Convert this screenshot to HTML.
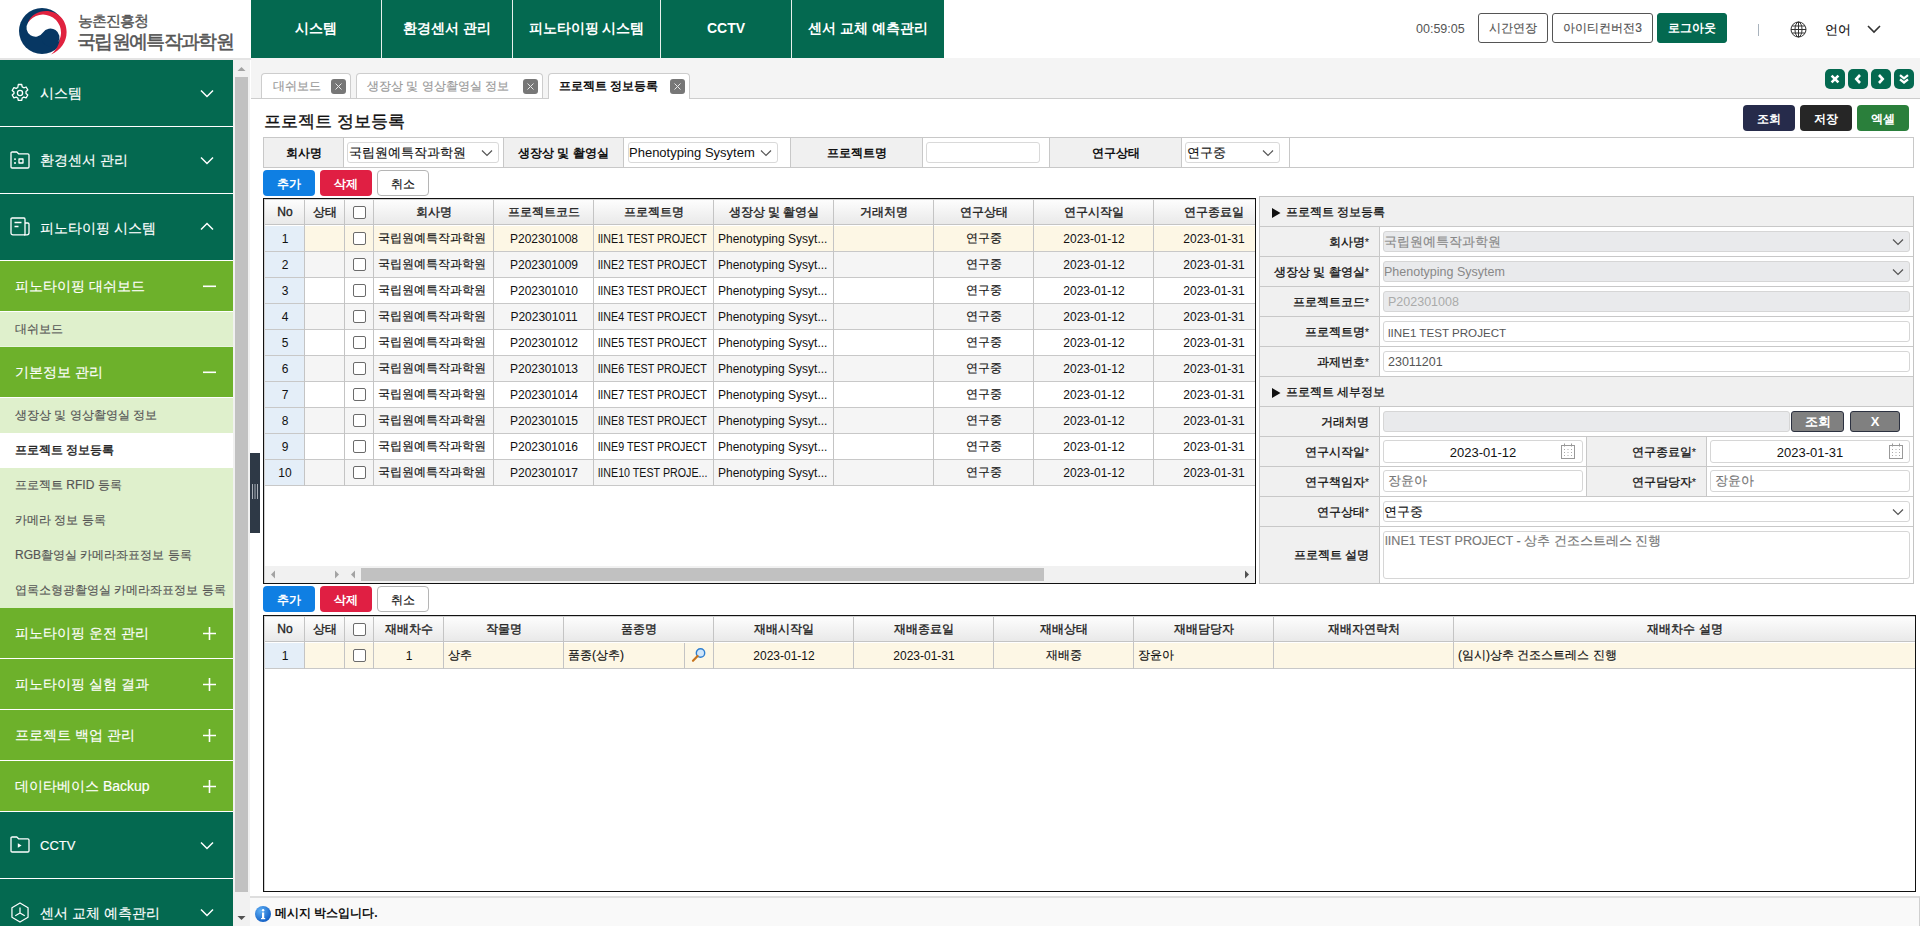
<!DOCTYPE html>
<html lang="ko">
<head>
<meta charset="utf-8">
<style>
*{box-sizing:border-box;margin:0;padding:0}
html,body{width:1920px;height:926px;overflow:hidden;background:#fff}
body{position:relative;font-family:"Liberation Sans",sans-serif;color:#222;font-size:12px;-webkit-text-stroke:0.15px currentColor}
[style*="font-weight:bold"],#nav div{-webkit-text-stroke:0}
.abs{position:absolute}
/* header */
#hdr{left:0;top:0;width:1920px;height:58px;background:#fff}
#logo-t1{left:78px;top:12px;font-size:15px;color:#555;white-space:nowrap;letter-spacing:-0.9px;-webkit-text-stroke:0.4px #555}
#logo-t2{left:77px;top:29px;font-size:19px;color:#555;white-space:nowrap;letter-spacing:-1.65px;-webkit-text-stroke:0.5px #555}
#nav{left:251px;top:0;height:58px;display:flex;background:#046950}
#nav div{height:58px;line-height:56px;text-align:center;color:#fff;font-weight:bold;font-size:14px;white-space:nowrap;border-right:1px solid #e8f0ec}
#nav div:last-child{border-right:none}
#time{left:1416px;top:21px;font-size:12.5px;-webkit-text-stroke:0;color:#555;line-height:16px}
.hbtn{top:13px;height:30px;border:1px solid #555;border-radius:3px;background:#fff;color:#555;font-size:12px;line-height:28px;text-align:center;white-space:nowrap}
#hline{left:0;top:58px;width:1920px;height:2px;background:#e4e4e4}
/* sidebar */
#side{left:0;top:60px;width:233px;height:866px;background:#fff;overflow:hidden}
.m1{position:absolute;left:0;width:233px;background:#046950;color:#fff;font-size:14px}
.m1 .ic{position:absolute;left:10px}
.m1 .tx{position:absolute;left:40px;white-space:nowrap}
.m1 .ch{position:absolute;left:200px}
.m2{position:absolute;left:0;width:233px;height:50px;background:#6db12b;color:#fff;font-size:14px}
.m2 .tx{position:absolute;left:15px;top:17px;white-space:nowrap;line-height:17px}
.m2 .pm{position:absolute;left:203px;top:0}
.m3{position:absolute;left:0;width:233px;height:35px;background:#dff0cc;color:#555;font-size:12px}
.m3 .tx{position:absolute;left:15px;top:10px;white-space:nowrap;line-height:15px}
.sep{position:absolute;left:0;width:233px;height:1px;background:#fff}
#sscroll{left:233px;top:60px;width:17px;height:866px;background:#f1f1f1}
#sthumb{left:235px;top:77px;width:13px;height:815px;background:#c1c1c1}
/* content */
#tabbar{left:251px;top:58px;width:1669px;height:41px;background:#f4f4f4;border-bottom:1px solid #cfcfcf}
.tab{position:absolute;top:15px;height:26px;background:#fff;border:1px solid #cfcfcf;border-bottom:none;border-radius:4px 4px 0 0;font-size:12px;color:#999;white-space:nowrap}
.tab .tx{position:absolute;top:6px;line-height:15px}
.tab .x{position:absolute;top:6px;width:15px;height:15px;background:#777;border-radius:3px}
.tab .x svg{position:absolute;left:3px;top:3px}
.tnav{position:absolute;top:10px;width:20px;height:20px;border-radius:5px;background:#046950}
.tnav svg{position:absolute;left:0;top:0}
#main{left:251px;top:99px;width:1669px;height:798px;background:#fff}
</style>
</head>
<body>
<!-- HEADER -->
<div id="hdr" class="abs">
  <svg class="abs" style="left:15px;top:4px" width="56" height="54" viewBox="0 0 56 54">
    <circle cx="27" cy="27" r="23" fill="#073763"/>
    <path d="M12.95 18.7 C16 11 23 7 31 7 C43 7 51.6 16 51.6 28 C51.6 38 46 46 36 50.5 C43 45 46 37 44.5 28.6 A16.5 16.5 0 0 0 14.21 19.54Z" fill="#e0223f"/>
    <circle cx="35.5" cy="33.5" r="9" fill="#073763"/>
    <path d="M12.95 18.7 A18 18 0 0 1 43.05 38.5 A9 9 0 0 0 28 28.6 A9 9 0 0 1 12.95 18.7Z" fill="#fff"/>
  </svg>
  <div id="logo-t1" class="abs">농촌진흥청</div>
  <div id="logo-t2" class="abs">국립원예특작과학원</div>
</div>
<div id="nav" class="abs">
  <div style="width:131px">시스템</div>
  <div style="width:131px">환경센서 관리</div>
  <div style="width:148px">피노타이핑 시스템</div>
  <div style="width:131px">CCTV</div>
  <div style="width:152px">센서 교체 예측관리</div>
</div>
<div id="time" class="abs">00:59:05</div>
<div class="abs hbtn" style="left:1478px;width:70px">시간연장</div>
<div class="abs hbtn" style="left:1552px;width:101px">아이티컨버전3</div>
<div class="abs hbtn" style="left:1657px;width:70px;background:#046950;border-color:#046950;color:#fff;font-weight:bold">로그아웃</div>
<div class="abs" style="left:1758px;top:24px;width:1px;height:12px;background:#a9b3bd"></div>
<svg class="abs" style="left:1790px;top:21px" width="17" height="17" viewBox="0 0 17 17" fill="none" stroke="#333" stroke-width="1">
  <circle cx="8.5" cy="8.5" r="7.5"/><ellipse cx="8.5" cy="8.5" rx="3.5" ry="7.5"/><line x1="8.5" y1="1" x2="8.5" y2="16"/><line x1="1" y1="8.5" x2="16" y2="8.5"/><line x1="2" y1="5" x2="15" y2="5"/><line x1="2" y1="12" x2="15" y2="12"/>
</svg>
<div class="abs" style="left:1825px;top:22px;font-size:12.5px;color:#111;line-height:17px">언어</div>
<svg class="abs" style="left:1867px;top:25px" width="14" height="9" viewBox="0 0 14 9" fill="none" stroke="#333" stroke-width="1.6"><path d="M1 1 L7 7 L13 1"/></svg>
<div id="hline" class="abs"></div>

<!-- MAIN -->
<div class="abs" style="left:251px;top:58px;width:1669px;height:41px;background:#f4f4f4;border-bottom:1px solid #cdcdcd"></div>
<div class="abs" style="left:261px;top:73px;width:90px;height:25px;background:#fff;border:1px solid #cdcdcd;border-bottom:none;border-radius:4px 4px 0 0"></div>
<div class="abs" style="left:273px;top:79px;font-size:12px;line-height:15px;color:#999;font-weight:normal;white-space:nowrap">대쉬보드</div>
<div class="abs" style="left:331px;top:79px;width:15px;height:15px;background:#777;border-radius:3px"><svg class="abs" style="left:4px;top:4px" width="7" height="7"><path d="M0.5 0.5L6.5 6.5M6.5 0.5L0.5 6.5" stroke="#e8e8e8" stroke-width="1"/></svg></div>
<div class="abs" style="left:356px;top:73px;width:187px;height:25px;background:#fff;border:1px solid #cdcdcd;border-bottom:none;border-radius:4px 4px 0 0"></div>
<div class="abs" style="left:367px;top:79px;font-size:12px;line-height:15px;color:#999;font-weight:normal;white-space:nowrap">생장상 및 영상촬영실 정보</div>
<div class="abs" style="left:523px;top:79px;width:15px;height:15px;background:#777;border-radius:3px"><svg class="abs" style="left:4px;top:4px" width="7" height="7"><path d="M0.5 0.5L6.5 6.5M6.5 0.5L0.5 6.5" stroke="#e8e8e8" stroke-width="1"/></svg></div>
<div class="abs" style="left:548px;top:73px;width:142px;height:26px;background:#fff;border:1px solid #cdcdcd;border-bottom:none;border-radius:4px 4px 0 0"></div>
<div class="abs" style="left:559px;top:79px;font-size:12px;line-height:15px;color:#111;font-weight:bold;white-space:nowrap">프로젝트 정보등록</div>
<div class="abs" style="left:670px;top:79px;width:15px;height:15px;background:#777;border-radius:3px"><svg class="abs" style="left:4px;top:4px" width="7" height="7"><path d="M0.5 0.5L6.5 6.5M6.5 0.5L0.5 6.5" stroke="#e8e8e8" stroke-width="1"/></svg></div>
<div class="abs" style="left:1825px;top:69px;width:20px;height:20px;border-radius:5px;background:#046950"><svg class="abs" style="left:0;top:0" width="20" height="20"><path d="M6.6 6.6L13.4 13.4M13.4 6.6L6.6 13.4" stroke="#fff" stroke-width="2.6"/></svg></div>
<div class="abs" style="left:1848px;top:69px;width:20px;height:20px;border-radius:5px;background:#046950"><svg class="abs" style="left:0;top:0" width="20" height="20"><path d="M12 6L8.3 10L12 14" stroke="#fff" stroke-width="2.6" fill="none"/></svg></div>
<div class="abs" style="left:1871px;top:69px;width:20px;height:20px;border-radius:5px;background:#046950"><svg class="abs" style="left:0;top:0" width="20" height="20"><path d="M8 6L11.7 10L8 14" stroke="#fff" stroke-width="2.6" fill="none"/></svg></div>
<div class="abs" style="left:1894px;top:69px;width:20px;height:20px;border-radius:5px;background:#046950"><svg class="abs" style="left:0;top:0" width="20" height="20"><path d="M6 6.2L10 9.3L14 6.2M6 10.4L10 13.5L14 10.4" stroke="#fff" stroke-width="2.3" fill="none"/></svg></div>
<div class="abs" style="left:264px;top:110px;font-size:17.4px;line-height:22px;color:#111;-webkit-text-stroke:0.35px #111;white-space:nowrap">프로젝트 정보등록</div>
<div class="abs" style="left:1743px;top:105px;width:52px;height:26px;background:#262b4b;border-radius:4px;color:#fff;font-weight:bold;font-size:12px;line-height:28px;text-align:center">조회</div>
<div class="abs" style="left:1800px;top:105px;width:52px;height:26px;background:#262626;border-radius:4px;color:#fff;font-weight:bold;font-size:12px;line-height:28px;text-align:center">저장</div>
<div class="abs" style="left:1857px;top:105px;width:52px;height:26px;background:#2a7f3b;border-radius:4px;color:#fff;font-weight:bold;font-size:12px;line-height:28px;text-align:center">엑셀</div>
<div class="abs" style="left:263px;top:137px;width:1651px;height:31px;border:1px solid #c8c8c8;background:#fff"></div>
<div class="abs" style="left:264px;top:138px;width:80px;height:29px;background:#f0f0f0;border-right:1px solid #c8c8c8;font-weight:bold;font-size:12px;line-height:30px;text-align:center;color:#111;white-space:nowrap">회사명</div>
<div class="abs" style="left:504px;top:138px;width:120px;height:29px;background:#f0f0f0;border-right:1px solid #c8c8c8;font-weight:bold;font-size:12px;line-height:30px;text-align:center;color:#111;white-space:nowrap">생장상 및 촬영실</div>
<div class="abs" style="left:791px;top:138px;width:132px;height:29px;background:#f0f0f0;border-right:1px solid #c8c8c8;font-weight:bold;font-size:12px;line-height:30px;text-align:center;color:#111;white-space:nowrap">프로젝트명</div>
<div class="abs" style="left:1050px;top:138px;width:132px;height:29px;background:#f0f0f0;border-right:1px solid #c8c8c8;font-weight:bold;font-size:12px;line-height:30px;text-align:center;color:#111;white-space:nowrap">연구상태</div>
<div class="abs" style="left:503px;top:138px;width:1px;height:29px;background:#c8c8c8"></div>
<div class="abs" style="left:790px;top:138px;width:1px;height:29px;background:#c8c8c8"></div>
<div class="abs" style="left:1049px;top:138px;width:1px;height:29px;background:#c8c8c8"></div>
<div class="abs" style="left:1289px;top:138px;width:1px;height:29px;background:#c8c8c8"></div>
<div class="abs" style="left:347px;top:142px;width:152px;height:21px;border:1px solid #d9d9d9;border-radius:3px;background:#fff"></div>
<div class="abs" style="left:349px;top:142px;line-height:21px;font-size:13px;color:#111;white-space:nowrap;">국립원예특작과학원</div>
<svg class="abs" style="left:481px;top:149px" width="12" height="8"><path d="M1 1.5L6 6.5L11 1.5" stroke="#555" stroke-width="1.2" fill="none"/></svg>
<div class="abs" style="left:628px;top:142px;width:150px;height:21px;border:1px solid #d9d9d9;border-radius:3px;background:#fff"></div>
<div class="abs" style="left:629px;top:142px;line-height:21px;font-size:13px;color:#111;white-space:nowrap;-webkit-text-stroke:0;">Phenotyping Sysytem</div>
<svg class="abs" style="left:760px;top:149px" width="12" height="8"><path d="M1 1.5L6 6.5L11 1.5" stroke="#555" stroke-width="1.2" fill="none"/></svg>
<div class="abs" style="left:926px;top:142px;width:114px;height:21px;border:1px solid #d9d9d9;border-radius:3px;background:#fff"></div>
<div class="abs" style="left:1185px;top:142px;width:95px;height:21px;border:1px solid #d9d9d9;border-radius:3px;background:#fff"></div>
<div class="abs" style="left:1187px;top:142px;line-height:21px;font-size:13px;color:#111;white-space:nowrap;">연구중</div>
<svg class="abs" style="left:1262px;top:149px" width="12" height="8"><path d="M1 1.5L6 6.5L11 1.5" stroke="#555" stroke-width="1.2" fill="none"/></svg>
<div class="abs" style="left:263px;top:170px;width:52px;height:26px;background:#0f7fe3;border-radius:4px;color:#fff;font-weight:bold;font-size:12px;line-height:28px;text-align:center">추가</div>
<div class="abs" style="left:320px;top:170px;width:52px;height:26px;background:#e01f43;border-radius:4px;color:#fff;font-weight:bold;font-size:12px;line-height:28px;text-align:center">삭제</div>
<div class="abs" style="left:377px;top:170px;width:52px;height:26px;background:#fff;border:1px solid #b5b5b5;border-radius:4px;color:#111;font-size:12px;line-height:26px;text-align:center">취소</div>
<div class="abs" style="left:263px;top:586px;width:52px;height:26px;background:#0f7fe3;border-radius:4px;color:#fff;font-weight:bold;font-size:12px;line-height:28px;text-align:center">추가</div>
<div class="abs" style="left:320px;top:586px;width:52px;height:26px;background:#e01f43;border-radius:4px;color:#fff;font-weight:bold;font-size:12px;line-height:28px;text-align:center">삭제</div>
<div class="abs" style="left:377px;top:586px;width:52px;height:26px;background:#fff;border:1px solid #b5b5b5;border-radius:4px;color:#111;font-size:12px;line-height:26px;text-align:center">취소</div>
<div class="abs" style="left:263px;top:198px;width:993px;height:386px;border:1px solid #111;background:#fff;overflow:hidden">
<div class="abs" style="left:0;top:0;width:991px;height:1px;background:#d0d0d0"></div>
<div class="abs" style="left:0;top:0;width:1px;height:384px;background:#d0d0d0"></div>
<div class="abs" style="left:1px;top:1px;width:991px;height:25px;background:linear-gradient(#fdfdfd,#e9e9e9);border-bottom:1px solid #c4c4c4"></div>
<div class="abs" style="left:1px;top:1px;width:40px;height:25px;line-height:25px;text-align:center;font-size:12px;font-weight:normal;color:#222;-webkit-text-stroke:0.35px #222;white-space:nowrap">No</div>
<div class="abs" style="left:41px;top:1px;width:40px;height:25px;line-height:25px;text-align:center;font-size:12px;font-weight:normal;color:#222;-webkit-text-stroke:0.35px #222;white-space:nowrap">상태</div>
<div class="abs" style="left:89px;top:7px;width:13px;height:13px;border:1px solid #6b6b6b;border-radius:2px;background:#fff"></div>
<div class="abs" style="left:110px;top:1px;width:120px;height:25px;line-height:25px;text-align:center;font-size:12px;font-weight:normal;color:#222;-webkit-text-stroke:0.35px #222;white-space:nowrap">회사명</div>
<div class="abs" style="left:230px;top:1px;width:100px;height:25px;line-height:25px;text-align:center;font-size:12px;font-weight:normal;color:#222;-webkit-text-stroke:0.35px #222;white-space:nowrap">프로젝트코드</div>
<div class="abs" style="left:330px;top:1px;width:120px;height:25px;line-height:25px;text-align:center;font-size:12px;font-weight:normal;color:#222;-webkit-text-stroke:0.35px #222;white-space:nowrap">프로젝트명</div>
<div class="abs" style="left:450px;top:1px;width:120px;height:25px;line-height:25px;text-align:center;font-size:12px;font-weight:normal;color:#222;-webkit-text-stroke:0.35px #222;white-space:nowrap">생장상 및 촬영실</div>
<div class="abs" style="left:570px;top:1px;width:100px;height:25px;line-height:25px;text-align:center;font-size:12px;font-weight:normal;color:#222;-webkit-text-stroke:0.35px #222;white-space:nowrap">거래처명</div>
<div class="abs" style="left:670px;top:1px;width:100px;height:25px;line-height:25px;text-align:center;font-size:12px;font-weight:normal;color:#222;-webkit-text-stroke:0.35px #222;white-space:nowrap">연구상태</div>
<div class="abs" style="left:770px;top:1px;width:120px;height:25px;line-height:25px;text-align:center;font-size:12px;font-weight:normal;color:#222;-webkit-text-stroke:0.35px #222;white-space:nowrap">연구시작일</div>
<div class="abs" style="left:890px;top:1px;width:120px;height:25px;line-height:25px;text-align:center;font-size:12px;font-weight:normal;color:#222;-webkit-text-stroke:0.35px #222;white-space:nowrap">연구종료일</div>
<div class="abs" style="left:1px;top:27px;width:991px;height:26px;background:#fdf7e5;border-bottom:1px solid #c8c8c8"></div>
<div class="abs" style="left:1px;top:27px;width:39px;height:25px;background:#e4eef8"></div>
<div class="abs" style="left:1px;top:28px;width:40px;height:25px;line-height:25px;text-align:center;font-size:12px;color:#111;white-space:nowrap;overflow:hidden;-webkit-text-stroke:0;">1</div>
<div class="abs" style="left:41px;top:27px;width:40px;height:25px;line-height:25px;text-align:center;font-size:12px;color:#111;white-space:nowrap;overflow:hidden;"></div>
<div class="abs" style="left:89px;top:33px;width:13px;height:13px;border:1px solid #6b6b6b;border-radius:2px;background:#fff"></div>
<div class="abs" style="left:114px;top:27px;line-height:25px;font-size:12px;color:#111;white-space:nowrap;">국립원예특작과학원</div>
<div class="abs" style="left:230px;top:28px;width:100px;height:25px;line-height:25px;text-align:center;font-size:12px;color:#111;white-space:nowrap;overflow:hidden;-webkit-text-stroke:0;">P202301008</div>
<div class="abs" style="left:334px;top:28px;line-height:25px;font-size:12px;color:#111;white-space:nowrap;transform:scaleX(0.89);transform-origin:0 0;-webkit-text-stroke:0;">lINE1 TEST PROJECT</div>
<div class="abs" style="left:454px;top:28px;line-height:25px;font-size:12px;color:#111;white-space:nowrap;-webkit-text-stroke:0;">Phenotyping Sysyt...</div>
<div class="abs" style="left:570px;top:27px;width:100px;height:25px;line-height:25px;text-align:center;font-size:12px;color:#111;white-space:nowrap;overflow:hidden;"></div>
<div class="abs" style="left:670px;top:27px;width:100px;height:25px;line-height:25px;text-align:center;font-size:12px;color:#111;white-space:nowrap;overflow:hidden;">연구중</div>
<div class="abs" style="left:770px;top:28px;width:120px;height:25px;line-height:25px;text-align:center;font-size:12px;color:#111;white-space:nowrap;overflow:hidden;-webkit-text-stroke:0;">2023-01-12</div>
<div class="abs" style="left:890px;top:28px;width:120px;height:25px;line-height:25px;text-align:center;font-size:12px;color:#111;white-space:nowrap;overflow:hidden;-webkit-text-stroke:0;">2023-01-31</div>
<div class="abs" style="left:1px;top:53px;width:991px;height:26px;background:#f5f5f5;border-bottom:1px solid #c8c8c8"></div>
<div class="abs" style="left:1px;top:53px;width:39px;height:25px;background:#e4eef8"></div>
<div class="abs" style="left:1px;top:54px;width:40px;height:25px;line-height:25px;text-align:center;font-size:12px;color:#111;white-space:nowrap;overflow:hidden;-webkit-text-stroke:0;">2</div>
<div class="abs" style="left:41px;top:53px;width:40px;height:25px;line-height:25px;text-align:center;font-size:12px;color:#111;white-space:nowrap;overflow:hidden;"></div>
<div class="abs" style="left:89px;top:59px;width:13px;height:13px;border:1px solid #6b6b6b;border-radius:2px;background:#fff"></div>
<div class="abs" style="left:114px;top:53px;line-height:25px;font-size:12px;color:#111;white-space:nowrap;">국립원예특작과학원</div>
<div class="abs" style="left:230px;top:54px;width:100px;height:25px;line-height:25px;text-align:center;font-size:12px;color:#111;white-space:nowrap;overflow:hidden;-webkit-text-stroke:0;">P202301009</div>
<div class="abs" style="left:334px;top:54px;line-height:25px;font-size:12px;color:#111;white-space:nowrap;transform:scaleX(0.89);transform-origin:0 0;-webkit-text-stroke:0;">lINE2 TEST PROJECT</div>
<div class="abs" style="left:454px;top:54px;line-height:25px;font-size:12px;color:#111;white-space:nowrap;-webkit-text-stroke:0;">Phenotyping Sysyt...</div>
<div class="abs" style="left:570px;top:53px;width:100px;height:25px;line-height:25px;text-align:center;font-size:12px;color:#111;white-space:nowrap;overflow:hidden;"></div>
<div class="abs" style="left:670px;top:53px;width:100px;height:25px;line-height:25px;text-align:center;font-size:12px;color:#111;white-space:nowrap;overflow:hidden;">연구중</div>
<div class="abs" style="left:770px;top:54px;width:120px;height:25px;line-height:25px;text-align:center;font-size:12px;color:#111;white-space:nowrap;overflow:hidden;-webkit-text-stroke:0;">2023-01-12</div>
<div class="abs" style="left:890px;top:54px;width:120px;height:25px;line-height:25px;text-align:center;font-size:12px;color:#111;white-space:nowrap;overflow:hidden;-webkit-text-stroke:0;">2023-01-31</div>
<div class="abs" style="left:1px;top:79px;width:991px;height:26px;background:#fff;border-bottom:1px solid #c8c8c8"></div>
<div class="abs" style="left:1px;top:79px;width:39px;height:25px;background:#e4eef8"></div>
<div class="abs" style="left:1px;top:80px;width:40px;height:25px;line-height:25px;text-align:center;font-size:12px;color:#111;white-space:nowrap;overflow:hidden;-webkit-text-stroke:0;">3</div>
<div class="abs" style="left:41px;top:79px;width:40px;height:25px;line-height:25px;text-align:center;font-size:12px;color:#111;white-space:nowrap;overflow:hidden;"></div>
<div class="abs" style="left:89px;top:85px;width:13px;height:13px;border:1px solid #6b6b6b;border-radius:2px;background:#fff"></div>
<div class="abs" style="left:114px;top:79px;line-height:25px;font-size:12px;color:#111;white-space:nowrap;">국립원예특작과학원</div>
<div class="abs" style="left:230px;top:80px;width:100px;height:25px;line-height:25px;text-align:center;font-size:12px;color:#111;white-space:nowrap;overflow:hidden;-webkit-text-stroke:0;">P202301010</div>
<div class="abs" style="left:334px;top:80px;line-height:25px;font-size:12px;color:#111;white-space:nowrap;transform:scaleX(0.89);transform-origin:0 0;-webkit-text-stroke:0;">lINE3 TEST PROJECT</div>
<div class="abs" style="left:454px;top:80px;line-height:25px;font-size:12px;color:#111;white-space:nowrap;-webkit-text-stroke:0;">Phenotyping Sysyt...</div>
<div class="abs" style="left:570px;top:79px;width:100px;height:25px;line-height:25px;text-align:center;font-size:12px;color:#111;white-space:nowrap;overflow:hidden;"></div>
<div class="abs" style="left:670px;top:79px;width:100px;height:25px;line-height:25px;text-align:center;font-size:12px;color:#111;white-space:nowrap;overflow:hidden;">연구중</div>
<div class="abs" style="left:770px;top:80px;width:120px;height:25px;line-height:25px;text-align:center;font-size:12px;color:#111;white-space:nowrap;overflow:hidden;-webkit-text-stroke:0;">2023-01-12</div>
<div class="abs" style="left:890px;top:80px;width:120px;height:25px;line-height:25px;text-align:center;font-size:12px;color:#111;white-space:nowrap;overflow:hidden;-webkit-text-stroke:0;">2023-01-31</div>
<div class="abs" style="left:1px;top:105px;width:991px;height:26px;background:#f5f5f5;border-bottom:1px solid #c8c8c8"></div>
<div class="abs" style="left:1px;top:105px;width:39px;height:25px;background:#e4eef8"></div>
<div class="abs" style="left:1px;top:106px;width:40px;height:25px;line-height:25px;text-align:center;font-size:12px;color:#111;white-space:nowrap;overflow:hidden;-webkit-text-stroke:0;">4</div>
<div class="abs" style="left:41px;top:105px;width:40px;height:25px;line-height:25px;text-align:center;font-size:12px;color:#111;white-space:nowrap;overflow:hidden;"></div>
<div class="abs" style="left:89px;top:111px;width:13px;height:13px;border:1px solid #6b6b6b;border-radius:2px;background:#fff"></div>
<div class="abs" style="left:114px;top:105px;line-height:25px;font-size:12px;color:#111;white-space:nowrap;">국립원예특작과학원</div>
<div class="abs" style="left:230px;top:106px;width:100px;height:25px;line-height:25px;text-align:center;font-size:12px;color:#111;white-space:nowrap;overflow:hidden;-webkit-text-stroke:0;">P202301011</div>
<div class="abs" style="left:334px;top:106px;line-height:25px;font-size:12px;color:#111;white-space:nowrap;transform:scaleX(0.89);transform-origin:0 0;-webkit-text-stroke:0;">lINE4 TEST PROJECT</div>
<div class="abs" style="left:454px;top:106px;line-height:25px;font-size:12px;color:#111;white-space:nowrap;-webkit-text-stroke:0;">Phenotyping Sysyt...</div>
<div class="abs" style="left:570px;top:105px;width:100px;height:25px;line-height:25px;text-align:center;font-size:12px;color:#111;white-space:nowrap;overflow:hidden;"></div>
<div class="abs" style="left:670px;top:105px;width:100px;height:25px;line-height:25px;text-align:center;font-size:12px;color:#111;white-space:nowrap;overflow:hidden;">연구중</div>
<div class="abs" style="left:770px;top:106px;width:120px;height:25px;line-height:25px;text-align:center;font-size:12px;color:#111;white-space:nowrap;overflow:hidden;-webkit-text-stroke:0;">2023-01-12</div>
<div class="abs" style="left:890px;top:106px;width:120px;height:25px;line-height:25px;text-align:center;font-size:12px;color:#111;white-space:nowrap;overflow:hidden;-webkit-text-stroke:0;">2023-01-31</div>
<div class="abs" style="left:1px;top:131px;width:991px;height:26px;background:#fff;border-bottom:1px solid #c8c8c8"></div>
<div class="abs" style="left:1px;top:131px;width:39px;height:25px;background:#e4eef8"></div>
<div class="abs" style="left:1px;top:132px;width:40px;height:25px;line-height:25px;text-align:center;font-size:12px;color:#111;white-space:nowrap;overflow:hidden;-webkit-text-stroke:0;">5</div>
<div class="abs" style="left:41px;top:131px;width:40px;height:25px;line-height:25px;text-align:center;font-size:12px;color:#111;white-space:nowrap;overflow:hidden;"></div>
<div class="abs" style="left:89px;top:137px;width:13px;height:13px;border:1px solid #6b6b6b;border-radius:2px;background:#fff"></div>
<div class="abs" style="left:114px;top:131px;line-height:25px;font-size:12px;color:#111;white-space:nowrap;">국립원예특작과학원</div>
<div class="abs" style="left:230px;top:132px;width:100px;height:25px;line-height:25px;text-align:center;font-size:12px;color:#111;white-space:nowrap;overflow:hidden;-webkit-text-stroke:0;">P202301012</div>
<div class="abs" style="left:334px;top:132px;line-height:25px;font-size:12px;color:#111;white-space:nowrap;transform:scaleX(0.89);transform-origin:0 0;-webkit-text-stroke:0;">lINE5 TEST PROJECT</div>
<div class="abs" style="left:454px;top:132px;line-height:25px;font-size:12px;color:#111;white-space:nowrap;-webkit-text-stroke:0;">Phenotyping Sysyt...</div>
<div class="abs" style="left:570px;top:131px;width:100px;height:25px;line-height:25px;text-align:center;font-size:12px;color:#111;white-space:nowrap;overflow:hidden;"></div>
<div class="abs" style="left:670px;top:131px;width:100px;height:25px;line-height:25px;text-align:center;font-size:12px;color:#111;white-space:nowrap;overflow:hidden;">연구중</div>
<div class="abs" style="left:770px;top:132px;width:120px;height:25px;line-height:25px;text-align:center;font-size:12px;color:#111;white-space:nowrap;overflow:hidden;-webkit-text-stroke:0;">2023-01-12</div>
<div class="abs" style="left:890px;top:132px;width:120px;height:25px;line-height:25px;text-align:center;font-size:12px;color:#111;white-space:nowrap;overflow:hidden;-webkit-text-stroke:0;">2023-01-31</div>
<div class="abs" style="left:1px;top:157px;width:991px;height:26px;background:#f5f5f5;border-bottom:1px solid #c8c8c8"></div>
<div class="abs" style="left:1px;top:157px;width:39px;height:25px;background:#e4eef8"></div>
<div class="abs" style="left:1px;top:158px;width:40px;height:25px;line-height:25px;text-align:center;font-size:12px;color:#111;white-space:nowrap;overflow:hidden;-webkit-text-stroke:0;">6</div>
<div class="abs" style="left:41px;top:157px;width:40px;height:25px;line-height:25px;text-align:center;font-size:12px;color:#111;white-space:nowrap;overflow:hidden;"></div>
<div class="abs" style="left:89px;top:163px;width:13px;height:13px;border:1px solid #6b6b6b;border-radius:2px;background:#fff"></div>
<div class="abs" style="left:114px;top:157px;line-height:25px;font-size:12px;color:#111;white-space:nowrap;">국립원예특작과학원</div>
<div class="abs" style="left:230px;top:158px;width:100px;height:25px;line-height:25px;text-align:center;font-size:12px;color:#111;white-space:nowrap;overflow:hidden;-webkit-text-stroke:0;">P202301013</div>
<div class="abs" style="left:334px;top:158px;line-height:25px;font-size:12px;color:#111;white-space:nowrap;transform:scaleX(0.89);transform-origin:0 0;-webkit-text-stroke:0;">lINE6 TEST PROJECT</div>
<div class="abs" style="left:454px;top:158px;line-height:25px;font-size:12px;color:#111;white-space:nowrap;-webkit-text-stroke:0;">Phenotyping Sysyt...</div>
<div class="abs" style="left:570px;top:157px;width:100px;height:25px;line-height:25px;text-align:center;font-size:12px;color:#111;white-space:nowrap;overflow:hidden;"></div>
<div class="abs" style="left:670px;top:157px;width:100px;height:25px;line-height:25px;text-align:center;font-size:12px;color:#111;white-space:nowrap;overflow:hidden;">연구중</div>
<div class="abs" style="left:770px;top:158px;width:120px;height:25px;line-height:25px;text-align:center;font-size:12px;color:#111;white-space:nowrap;overflow:hidden;-webkit-text-stroke:0;">2023-01-12</div>
<div class="abs" style="left:890px;top:158px;width:120px;height:25px;line-height:25px;text-align:center;font-size:12px;color:#111;white-space:nowrap;overflow:hidden;-webkit-text-stroke:0;">2023-01-31</div>
<div class="abs" style="left:1px;top:183px;width:991px;height:26px;background:#fff;border-bottom:1px solid #c8c8c8"></div>
<div class="abs" style="left:1px;top:183px;width:39px;height:25px;background:#e4eef8"></div>
<div class="abs" style="left:1px;top:184px;width:40px;height:25px;line-height:25px;text-align:center;font-size:12px;color:#111;white-space:nowrap;overflow:hidden;-webkit-text-stroke:0;">7</div>
<div class="abs" style="left:41px;top:183px;width:40px;height:25px;line-height:25px;text-align:center;font-size:12px;color:#111;white-space:nowrap;overflow:hidden;"></div>
<div class="abs" style="left:89px;top:189px;width:13px;height:13px;border:1px solid #6b6b6b;border-radius:2px;background:#fff"></div>
<div class="abs" style="left:114px;top:183px;line-height:25px;font-size:12px;color:#111;white-space:nowrap;">국립원예특작과학원</div>
<div class="abs" style="left:230px;top:184px;width:100px;height:25px;line-height:25px;text-align:center;font-size:12px;color:#111;white-space:nowrap;overflow:hidden;-webkit-text-stroke:0;">P202301014</div>
<div class="abs" style="left:334px;top:184px;line-height:25px;font-size:12px;color:#111;white-space:nowrap;transform:scaleX(0.89);transform-origin:0 0;-webkit-text-stroke:0;">lINE7 TEST PROJECT</div>
<div class="abs" style="left:454px;top:184px;line-height:25px;font-size:12px;color:#111;white-space:nowrap;-webkit-text-stroke:0;">Phenotyping Sysyt...</div>
<div class="abs" style="left:570px;top:183px;width:100px;height:25px;line-height:25px;text-align:center;font-size:12px;color:#111;white-space:nowrap;overflow:hidden;"></div>
<div class="abs" style="left:670px;top:183px;width:100px;height:25px;line-height:25px;text-align:center;font-size:12px;color:#111;white-space:nowrap;overflow:hidden;">연구중</div>
<div class="abs" style="left:770px;top:184px;width:120px;height:25px;line-height:25px;text-align:center;font-size:12px;color:#111;white-space:nowrap;overflow:hidden;-webkit-text-stroke:0;">2023-01-12</div>
<div class="abs" style="left:890px;top:184px;width:120px;height:25px;line-height:25px;text-align:center;font-size:12px;color:#111;white-space:nowrap;overflow:hidden;-webkit-text-stroke:0;">2023-01-31</div>
<div class="abs" style="left:1px;top:209px;width:991px;height:26px;background:#f5f5f5;border-bottom:1px solid #c8c8c8"></div>
<div class="abs" style="left:1px;top:209px;width:39px;height:25px;background:#e4eef8"></div>
<div class="abs" style="left:1px;top:210px;width:40px;height:25px;line-height:25px;text-align:center;font-size:12px;color:#111;white-space:nowrap;overflow:hidden;-webkit-text-stroke:0;">8</div>
<div class="abs" style="left:41px;top:209px;width:40px;height:25px;line-height:25px;text-align:center;font-size:12px;color:#111;white-space:nowrap;overflow:hidden;"></div>
<div class="abs" style="left:89px;top:215px;width:13px;height:13px;border:1px solid #6b6b6b;border-radius:2px;background:#fff"></div>
<div class="abs" style="left:114px;top:209px;line-height:25px;font-size:12px;color:#111;white-space:nowrap;">국립원예특작과학원</div>
<div class="abs" style="left:230px;top:210px;width:100px;height:25px;line-height:25px;text-align:center;font-size:12px;color:#111;white-space:nowrap;overflow:hidden;-webkit-text-stroke:0;">P202301015</div>
<div class="abs" style="left:334px;top:210px;line-height:25px;font-size:12px;color:#111;white-space:nowrap;transform:scaleX(0.89);transform-origin:0 0;-webkit-text-stroke:0;">lINE8 TEST PROJECT</div>
<div class="abs" style="left:454px;top:210px;line-height:25px;font-size:12px;color:#111;white-space:nowrap;-webkit-text-stroke:0;">Phenotyping Sysyt...</div>
<div class="abs" style="left:570px;top:209px;width:100px;height:25px;line-height:25px;text-align:center;font-size:12px;color:#111;white-space:nowrap;overflow:hidden;"></div>
<div class="abs" style="left:670px;top:209px;width:100px;height:25px;line-height:25px;text-align:center;font-size:12px;color:#111;white-space:nowrap;overflow:hidden;">연구중</div>
<div class="abs" style="left:770px;top:210px;width:120px;height:25px;line-height:25px;text-align:center;font-size:12px;color:#111;white-space:nowrap;overflow:hidden;-webkit-text-stroke:0;">2023-01-12</div>
<div class="abs" style="left:890px;top:210px;width:120px;height:25px;line-height:25px;text-align:center;font-size:12px;color:#111;white-space:nowrap;overflow:hidden;-webkit-text-stroke:0;">2023-01-31</div>
<div class="abs" style="left:1px;top:235px;width:991px;height:26px;background:#fff;border-bottom:1px solid #c8c8c8"></div>
<div class="abs" style="left:1px;top:235px;width:39px;height:25px;background:#e4eef8"></div>
<div class="abs" style="left:1px;top:236px;width:40px;height:25px;line-height:25px;text-align:center;font-size:12px;color:#111;white-space:nowrap;overflow:hidden;-webkit-text-stroke:0;">9</div>
<div class="abs" style="left:41px;top:235px;width:40px;height:25px;line-height:25px;text-align:center;font-size:12px;color:#111;white-space:nowrap;overflow:hidden;"></div>
<div class="abs" style="left:89px;top:241px;width:13px;height:13px;border:1px solid #6b6b6b;border-radius:2px;background:#fff"></div>
<div class="abs" style="left:114px;top:235px;line-height:25px;font-size:12px;color:#111;white-space:nowrap;">국립원예특작과학원</div>
<div class="abs" style="left:230px;top:236px;width:100px;height:25px;line-height:25px;text-align:center;font-size:12px;color:#111;white-space:nowrap;overflow:hidden;-webkit-text-stroke:0;">P202301016</div>
<div class="abs" style="left:334px;top:236px;line-height:25px;font-size:12px;color:#111;white-space:nowrap;transform:scaleX(0.89);transform-origin:0 0;-webkit-text-stroke:0;">lINE9 TEST PROJECT</div>
<div class="abs" style="left:454px;top:236px;line-height:25px;font-size:12px;color:#111;white-space:nowrap;-webkit-text-stroke:0;">Phenotyping Sysyt...</div>
<div class="abs" style="left:570px;top:235px;width:100px;height:25px;line-height:25px;text-align:center;font-size:12px;color:#111;white-space:nowrap;overflow:hidden;"></div>
<div class="abs" style="left:670px;top:235px;width:100px;height:25px;line-height:25px;text-align:center;font-size:12px;color:#111;white-space:nowrap;overflow:hidden;">연구중</div>
<div class="abs" style="left:770px;top:236px;width:120px;height:25px;line-height:25px;text-align:center;font-size:12px;color:#111;white-space:nowrap;overflow:hidden;-webkit-text-stroke:0;">2023-01-12</div>
<div class="abs" style="left:890px;top:236px;width:120px;height:25px;line-height:25px;text-align:center;font-size:12px;color:#111;white-space:nowrap;overflow:hidden;-webkit-text-stroke:0;">2023-01-31</div>
<div class="abs" style="left:1px;top:261px;width:991px;height:26px;background:#f5f5f5;border-bottom:1px solid #c8c8c8"></div>
<div class="abs" style="left:1px;top:261px;width:39px;height:25px;background:#e4eef8"></div>
<div class="abs" style="left:1px;top:262px;width:40px;height:25px;line-height:25px;text-align:center;font-size:12px;color:#111;white-space:nowrap;overflow:hidden;-webkit-text-stroke:0;">10</div>
<div class="abs" style="left:41px;top:261px;width:40px;height:25px;line-height:25px;text-align:center;font-size:12px;color:#111;white-space:nowrap;overflow:hidden;"></div>
<div class="abs" style="left:89px;top:267px;width:13px;height:13px;border:1px solid #6b6b6b;border-radius:2px;background:#fff"></div>
<div class="abs" style="left:114px;top:261px;line-height:25px;font-size:12px;color:#111;white-space:nowrap;">국립원예특작과학원</div>
<div class="abs" style="left:230px;top:262px;width:100px;height:25px;line-height:25px;text-align:center;font-size:12px;color:#111;white-space:nowrap;overflow:hidden;-webkit-text-stroke:0;">P202301017</div>
<div class="abs" style="left:334px;top:262px;line-height:25px;font-size:12px;color:#111;white-space:nowrap;transform:scaleX(0.89);transform-origin:0 0;-webkit-text-stroke:0;">lINE10 TEST PROJE...</div>
<div class="abs" style="left:454px;top:262px;line-height:25px;font-size:12px;color:#111;white-space:nowrap;-webkit-text-stroke:0;">Phenotyping Sysyt...</div>
<div class="abs" style="left:570px;top:261px;width:100px;height:25px;line-height:25px;text-align:center;font-size:12px;color:#111;white-space:nowrap;overflow:hidden;"></div>
<div class="abs" style="left:670px;top:261px;width:100px;height:25px;line-height:25px;text-align:center;font-size:12px;color:#111;white-space:nowrap;overflow:hidden;">연구중</div>
<div class="abs" style="left:770px;top:262px;width:120px;height:25px;line-height:25px;text-align:center;font-size:12px;color:#111;white-space:nowrap;overflow:hidden;-webkit-text-stroke:0;">2023-01-12</div>
<div class="abs" style="left:890px;top:262px;width:120px;height:25px;line-height:25px;text-align:center;font-size:12px;color:#111;white-space:nowrap;overflow:hidden;-webkit-text-stroke:0;">2023-01-31</div>
<div class="abs" style="left:40px;top:1px;width:1px;height:286px;background:#c4c4c4"></div>
<div class="abs" style="left:80px;top:1px;width:1px;height:286px;background:#c4c4c4"></div>
<div class="abs" style="left:109px;top:1px;width:1px;height:286px;background:#c4c4c4"></div>
<div class="abs" style="left:229px;top:1px;width:1px;height:286px;background:#c4c4c4"></div>
<div class="abs" style="left:329px;top:1px;width:1px;height:286px;background:#c4c4c4"></div>
<div class="abs" style="left:449px;top:1px;width:1px;height:286px;background:#c4c4c4"></div>
<div class="abs" style="left:569px;top:1px;width:1px;height:286px;background:#c4c4c4"></div>
<div class="abs" style="left:669px;top:1px;width:1px;height:286px;background:#c4c4c4"></div>
<div class="abs" style="left:769px;top:1px;width:1px;height:286px;background:#c4c4c4"></div>
<div class="abs" style="left:889px;top:1px;width:1px;height:286px;background:#c4c4c4"></div>
<div class="abs" style="left:1px;top:367px;width:990px;height:17px;background:#f1f1f1"></div>
<div class="abs" style="left:97px;top:369px;width:683px;height:13px;background:#c1c1c1"></div>
<svg class="abs" style="left:6px;top:371px" width="6" height="9"><path d="M5 0.5L1 4.5L5 8.5Z" fill="#a3a3a3"/></svg>
<svg class="abs" style="left:70px;top:371px" width="6" height="9"><path d="M1 0.5L5 4.5L1 8.5Z" fill="#a3a3a3"/></svg>
<svg class="abs" style="left:86px;top:371px" width="6" height="9"><path d="M5 0.5L1 4.5L5 8.5Z" fill="#a3a3a3"/></svg>
<svg class="abs" style="left:980px;top:371px" width="6" height="9"><path d="M1 0.5L5 4.5L1 8.5Z" fill="#505050"/></svg>
</div>
<div class="abs" style="left:263px;top:615px;width:1653px;height:277px;border:1px solid #111;background:#fff;overflow:hidden">
<div class="abs" style="left:0;top:0;width:1651px;height:1px;background:#d0d0d0"></div>
<div class="abs" style="left:0;top:0;width:1px;height:275px;background:#d0d0d0"></div>
<div class="abs" style="left:1px;top:1px;width:1651px;height:25px;background:linear-gradient(#fdfdfd,#e9e9e9);border-bottom:1px solid #c4c4c4"></div>
<div class="abs" style="left:1px;top:1px;width:40px;height:25px;line-height:25px;text-align:center;font-size:12px;font-weight:normal;color:#222;-webkit-text-stroke:0.35px #222;white-space:nowrap">No</div>
<div class="abs" style="left:41px;top:1px;width:40px;height:25px;line-height:25px;text-align:center;font-size:12px;font-weight:normal;color:#222;-webkit-text-stroke:0.35px #222;white-space:nowrap">상태</div>
<div class="abs" style="left:89px;top:7px;width:13px;height:13px;border:1px solid #6b6b6b;border-radius:2px;background:#fff"></div>
<div class="abs" style="left:110px;top:1px;width:70px;height:25px;line-height:25px;text-align:center;font-size:12px;font-weight:normal;color:#222;-webkit-text-stroke:0.35px #222;white-space:nowrap">재배차수</div>
<div class="abs" style="left:180px;top:1px;width:120px;height:25px;line-height:25px;text-align:center;font-size:12px;font-weight:normal;color:#222;-webkit-text-stroke:0.35px #222;white-space:nowrap">작물명</div>
<div class="abs" style="left:300px;top:1px;width:150px;height:25px;line-height:25px;text-align:center;font-size:12px;font-weight:normal;color:#222;-webkit-text-stroke:0.35px #222;white-space:nowrap">품종명</div>
<div class="abs" style="left:450px;top:1px;width:140px;height:25px;line-height:25px;text-align:center;font-size:12px;font-weight:normal;color:#222;-webkit-text-stroke:0.35px #222;white-space:nowrap">재배시작일</div>
<div class="abs" style="left:590px;top:1px;width:140px;height:25px;line-height:25px;text-align:center;font-size:12px;font-weight:normal;color:#222;-webkit-text-stroke:0.35px #222;white-space:nowrap">재배종료일</div>
<div class="abs" style="left:730px;top:1px;width:140px;height:25px;line-height:25px;text-align:center;font-size:12px;font-weight:normal;color:#222;-webkit-text-stroke:0.35px #222;white-space:nowrap">재배상태</div>
<div class="abs" style="left:870px;top:1px;width:140px;height:25px;line-height:25px;text-align:center;font-size:12px;font-weight:normal;color:#222;-webkit-text-stroke:0.35px #222;white-space:nowrap">재배담당자</div>
<div class="abs" style="left:1010px;top:1px;width:180px;height:25px;line-height:25px;text-align:center;font-size:12px;font-weight:normal;color:#222;-webkit-text-stroke:0.35px #222;white-space:nowrap">재배자연락처</div>
<div class="abs" style="left:1190px;top:1px;width:462px;height:25px;line-height:25px;text-align:center;font-size:12px;font-weight:normal;color:#222;-webkit-text-stroke:0.35px #222;white-space:nowrap">재배차수 설명</div>
<div class="abs" style="left:1px;top:27px;width:1651px;height:26px;background:#fdf7e5;border-bottom:1px solid #c8c8c8"></div>
<div class="abs" style="left:1px;top:27px;width:39px;height:25px;background:#e4eef8"></div>
<div class="abs" style="left:1px;top:28px;width:40px;height:25px;line-height:25px;text-align:center;font-size:12px;color:#111;white-space:nowrap;overflow:hidden;-webkit-text-stroke:0;">1</div>
<div class="abs" style="left:41px;top:27px;width:40px;height:25px;line-height:25px;text-align:center;font-size:12px;color:#111;white-space:nowrap;overflow:hidden;"></div>
<div class="abs" style="left:89px;top:33px;width:13px;height:13px;border:1px solid #6b6b6b;border-radius:2px;background:#fff"></div>
<div class="abs" style="left:110px;top:28px;width:70px;height:25px;line-height:25px;text-align:center;font-size:12px;color:#111;white-space:nowrap;overflow:hidden;-webkit-text-stroke:0;">1</div>
<div class="abs" style="left:184px;top:27px;line-height:25px;font-size:12px;color:#111;white-space:nowrap;">상추</div>
<div class="abs" style="left:304px;top:27px;line-height:25px;font-size:12px;color:#111;white-space:nowrap;">품종(상추)</div>
<div class="abs" style="left:450px;top:28px;width:140px;height:25px;line-height:25px;text-align:center;font-size:12px;color:#111;white-space:nowrap;overflow:hidden;-webkit-text-stroke:0;">2023-01-12</div>
<div class="abs" style="left:590px;top:28px;width:140px;height:25px;line-height:25px;text-align:center;font-size:12px;color:#111;white-space:nowrap;overflow:hidden;-webkit-text-stroke:0;">2023-01-31</div>
<div class="abs" style="left:730px;top:27px;width:140px;height:25px;line-height:25px;text-align:center;font-size:12px;color:#111;white-space:nowrap;overflow:hidden;">재배중</div>
<div class="abs" style="left:874px;top:27px;line-height:25px;font-size:12px;color:#111;white-space:nowrap;">장윤아</div>
<div class="abs" style="left:1010px;top:27px;width:180px;height:25px;line-height:25px;text-align:center;font-size:12px;color:#111;white-space:nowrap;overflow:hidden;"></div>
<div class="abs" style="left:1194px;top:27px;line-height:25px;font-size:12px;color:#111;white-space:nowrap;">(임시)상추 건조스트레스 진행</div>
<div class="abs" style="left:40px;top:1px;width:1px;height:52px;background:#c4c4c4"></div>
<div class="abs" style="left:80px;top:1px;width:1px;height:52px;background:#c4c4c4"></div>
<div class="abs" style="left:109px;top:1px;width:1px;height:52px;background:#c4c4c4"></div>
<div class="abs" style="left:179px;top:1px;width:1px;height:52px;background:#c4c4c4"></div>
<div class="abs" style="left:299px;top:1px;width:1px;height:52px;background:#c4c4c4"></div>
<div class="abs" style="left:449px;top:1px;width:1px;height:52px;background:#c4c4c4"></div>
<div class="abs" style="left:589px;top:1px;width:1px;height:52px;background:#c4c4c4"></div>
<div class="abs" style="left:729px;top:1px;width:1px;height:52px;background:#c4c4c4"></div>
<div class="abs" style="left:869px;top:1px;width:1px;height:52px;background:#c4c4c4"></div>
<div class="abs" style="left:1009px;top:1px;width:1px;height:52px;background:#c4c4c4"></div>
<div class="abs" style="left:1189px;top:1px;width:1px;height:52px;background:#c4c4c4"></div>
<div class="abs" style="left:420px;top:27px;width:1px;height:25px;background:#c4c4c4"></div>
<svg class="abs" style="left:427px;top:31px" width="16" height="16" viewBox="0 0 16 16"><circle cx="9.5" cy="6" r="4.2" fill="#cfe6fb" stroke="#2f7fd0" stroke-width="1.4"/><path d="M6.6 9 L2 13.8" stroke="#c8741c" stroke-width="2.2" stroke-linecap="round"/></svg>
</div>
<div class="abs" style="left:1259px;top:196px;width:655px;height:388px;border:1px solid #c4c4c4;background:#fff;overflow:hidden">
<div class="abs" style="left:0px;top:-1px;width:654px;height:30px;background:#f0f0f0"></div>
<svg class="abs" style="left:12px;top:11px" width="9" height="10"><path d="M0 0L8.5 5L0 10Z" fill="#111"/></svg>
<div class="abs" style="left:26px;top:0px;line-height:30px;font-size:12px;font-weight:normal;-webkit-text-stroke:0.3px #111;color:#111;white-space:nowrap">프로젝트 정보등록</div>
<div class="abs" style="left:0px;top:30px;width:119px;height:149px;background:#f0f0f0"></div>
<div class="abs" style="left:0px;top:210px;width:119px;height:177px;background:#f0f0f0"></div>
<div class="abs" style="left:327px;top:240px;width:119px;height:59px;background:#f0f0f0"></div>
<div class="abs" style="left:0px;top:179px;width:654px;height:30px;background:#f0f0f0"></div>
<svg class="abs" style="left:12px;top:191px" width="9" height="10"><path d="M0 0L8.5 5L0 10Z" fill="#111"/></svg>
<div class="abs" style="left:26px;top:180px;line-height:30px;font-size:12px;font-weight:normal;-webkit-text-stroke:0.3px #111;color:#111;white-space:nowrap">프로젝트 세부정보</div>
<div class="abs" style="left:0;top:29px;width:653px;height:1px;background:#c8c8c8"></div>
<div class="abs" style="left:0;top:59px;width:653px;height:1px;background:#c8c8c8"></div>
<div class="abs" style="left:0;top:89px;width:653px;height:1px;background:#c8c8c8"></div>
<div class="abs" style="left:0;top:119px;width:653px;height:1px;background:#c8c8c8"></div>
<div class="abs" style="left:0;top:149px;width:653px;height:1px;background:#c8c8c8"></div>
<div class="abs" style="left:0;top:179px;width:653px;height:1px;background:#c8c8c8"></div>
<div class="abs" style="left:0;top:209px;width:653px;height:1px;background:#c8c8c8"></div>
<div class="abs" style="left:0;top:239px;width:653px;height:1px;background:#c8c8c8"></div>
<div class="abs" style="left:0;top:269px;width:653px;height:1px;background:#c8c8c8"></div>
<div class="abs" style="left:0;top:299px;width:653px;height:1px;background:#c8c8c8"></div>
<div class="abs" style="left:0;top:329px;width:653px;height:1px;background:#c8c8c8"></div>
<div class="abs" style="left:119px;top:29px;width:1px;height:150px;background:#c8c8c8"></div>
<div class="abs" style="left:119px;top:209px;width:1px;height:178px;background:#c8c8c8"></div>
<div class="abs" style="left:326px;top:239px;width:1px;height:60px;background:#c8c8c8"></div>
<div class="abs" style="left:446px;top:239px;width:1px;height:60px;background:#c8c8c8"></div>
<div class="abs" style="left:-91px;top:30px;width:200px;height:30px;line-height:30px;text-align:right;font-size:12px;font-weight:normal;-webkit-text-stroke:0.3px #111;color:#111;white-space:nowrap">회사명<span style="-webkit-text-stroke:0;font-size:11px">*</span></div>
<div class="abs" style="left:-91px;top:60px;width:200px;height:30px;line-height:30px;text-align:right;font-size:12px;font-weight:normal;-webkit-text-stroke:0.3px #111;color:#111;white-space:nowrap">생장상 및 촬영실<span style="-webkit-text-stroke:0;font-size:11px">*</span></div>
<div class="abs" style="left:-91px;top:90px;width:200px;height:30px;line-height:30px;text-align:right;font-size:12px;font-weight:normal;-webkit-text-stroke:0.3px #111;color:#111;white-space:nowrap">프로젝트코드<span style="-webkit-text-stroke:0;font-size:11px">*</span></div>
<div class="abs" style="left:-91px;top:120px;width:200px;height:30px;line-height:30px;text-align:right;font-size:12px;font-weight:normal;-webkit-text-stroke:0.3px #111;color:#111;white-space:nowrap">프로젝트명<span style="-webkit-text-stroke:0;font-size:11px">*</span></div>
<div class="abs" style="left:-91px;top:150px;width:200px;height:30px;line-height:30px;text-align:right;font-size:12px;font-weight:normal;-webkit-text-stroke:0.3px #111;color:#111;white-space:nowrap">과제번호<span style="-webkit-text-stroke:0;font-size:11px">*</span></div>
<div class="abs" style="left:-91px;top:210px;width:200px;height:30px;line-height:30px;text-align:right;font-size:12px;font-weight:normal;-webkit-text-stroke:0.3px #111;color:#111;white-space:nowrap">거래처명</div>
<div class="abs" style="left:-91px;top:240px;width:200px;height:30px;line-height:30px;text-align:right;font-size:12px;font-weight:normal;-webkit-text-stroke:0.3px #111;color:#111;white-space:nowrap">연구시작일<span style="-webkit-text-stroke:0;font-size:11px">*</span></div>
<div class="abs" style="left:-91px;top:270px;width:200px;height:30px;line-height:30px;text-align:right;font-size:12px;font-weight:normal;-webkit-text-stroke:0.3px #111;color:#111;white-space:nowrap">연구책임자<span style="-webkit-text-stroke:0;font-size:11px">*</span></div>
<div class="abs" style="left:-91px;top:300px;width:200px;height:30px;line-height:30px;text-align:right;font-size:12px;font-weight:normal;-webkit-text-stroke:0.3px #111;color:#111;white-space:nowrap">연구상태<span style="-webkit-text-stroke:0;font-size:11px">*</span></div>
<div class="abs" style="left:-91px;top:330px;width:200px;height:57px;line-height:57px;text-align:right;font-size:12px;font-weight:normal;-webkit-text-stroke:0.3px #111;color:#111;white-space:nowrap">프로젝트 설명</div>
<div class="abs" style="left:236px;top:240px;width:200px;height:30px;line-height:30px;text-align:right;font-size:12px;font-weight:normal;-webkit-text-stroke:0.3px #111;color:#111;white-space:nowrap">연구종료일<span style="-webkit-text-stroke:0;font-size:11px">*</span></div>
<div class="abs" style="left:236px;top:270px;width:200px;height:30px;line-height:30px;text-align:right;font-size:12px;font-weight:normal;-webkit-text-stroke:0.3px #111;color:#111;white-space:nowrap">연구담당자<span style="-webkit-text-stroke:0;font-size:11px">*</span></div>
<div class="abs" style="left:123px;top:34px;width:527px;height:21px;border:1px solid #d6d6d6;border-radius:3px;background:#e9eaec"></div>
<div class="abs" style="left:124px;top:34px;line-height:21px;font-size:13px;color:#888;white-space:nowrap;">국립원예특작과학원</div>
<svg class="abs" style="left:632px;top:41px" width="12" height="8"><path d="M1 1.5L6 6.5L11 1.5" stroke="#555" stroke-width="1.2" fill="none"/></svg>
<div class="abs" style="left:123px;top:64px;width:527px;height:21px;border:1px solid #d6d6d6;border-radius:3px;background:#e9eaec"></div>
<div class="abs" style="left:124px;top:65px;line-height:21px;font-size:12.5px;color:#888;white-space:nowrap;-webkit-text-stroke:0;">Phenotyping Sysytem</div>
<svg class="abs" style="left:632px;top:71px" width="12" height="8"><path d="M1 1.5L6 6.5L11 1.5" stroke="#555" stroke-width="1.2" fill="none"/></svg>
<div class="abs" style="left:123px;top:94px;width:527px;height:21px;border:1px solid #d6d6d6;border-radius:3px;background:#e9eaec"></div>
<div class="abs" style="left:128px;top:95px;line-height:21px;font-size:12.5px;color:#aaa;white-space:nowrap;-webkit-text-stroke:0;">P202301008</div>
<div class="abs" style="left:123px;top:124px;width:527px;height:21px;border:1px solid #d6d6d6;border-radius:3px;background:#fff"></div>
<div class="abs" style="left:128px;top:125px;line-height:21px;font-size:11.6px;color:#555;white-space:nowrap;-webkit-text-stroke:0;">lINE1 TEST PROJECT</div>
<div class="abs" style="left:123px;top:154px;width:527px;height:21px;border:1px solid #d6d6d6;border-radius:3px;background:#fff"></div>
<div class="abs" style="left:128px;top:155px;line-height:21px;font-size:12.5px;color:#555;white-space:nowrap;-webkit-text-stroke:0;">23011201</div>
<div class="abs" style="left:123px;top:214px;width:407px;height:21px;border:1px solid #d6d6d6;border-radius:3px;background:#e9eaec"></div>
<div class="abs" style="left:531px;top:214px;width:53px;height:21px;background:#808080;border:1px solid #2c3140;border-radius:3px;color:#fff;font-weight:bold;font-size:13px;line-height:19px;text-align:center">조회</div>
<div class="abs" style="left:590px;top:214px;width:50px;height:21px;background:#808080;border:1px solid #2c3140;border-radius:3px;color:#fff;font-weight:bold;font-size:13px;line-height:19px;text-align:center">X</div>
<div class="abs" style="left:123px;top:243px;width:200px;height:23px;border:1px solid #d6d6d6;border-radius:3px;background:#fff"></div>
<div class="abs" style="left:123px;top:244px;width:200px;line-height:23px;text-align:center;font-size:13px;color:#111;white-space:nowrap;-webkit-text-stroke:0;">2023-01-12</div>
<svg class="abs" style="left:301px;top:246px" width="14" height="16" viewBox="0 0 14 16"><rect x="0.5" y="2.5" width="13" height="13" fill="#fff" stroke="#999"/><path d="M3.5 0.5v3M10.5 0.5v3" stroke="#999"/><g fill="#aaa"><rect x="3" y="6" width="1" height="1"/><rect x="6.5" y="6" width="1" height="1"/><rect x="10" y="6" width="1" height="1"/><rect x="3" y="9" width="1" height="1"/><rect x="6.5" y="9" width="1" height="1"/><rect x="10" y="9" width="1" height="1"/><rect x="3" y="12" width="1" height="1"/><rect x="6.5" y="12" width="1" height="1"/><rect x="10" y="12" width="1" height="1"/></g></svg>
<div class="abs" style="left:450px;top:243px;width:200px;height:23px;border:1px solid #d6d6d6;border-radius:3px;background:#fff"></div>
<div class="abs" style="left:450px;top:244px;width:200px;line-height:23px;text-align:center;font-size:13px;color:#111;white-space:nowrap;-webkit-text-stroke:0;">2023-01-31</div>
<svg class="abs" style="left:629px;top:246px" width="14" height="16" viewBox="0 0 14 16"><rect x="0.5" y="2.5" width="13" height="13" fill="#fff" stroke="#999"/><path d="M3.5 0.5v3M10.5 0.5v3" stroke="#999"/><g fill="#aaa"><rect x="3" y="6" width="1" height="1"/><rect x="6.5" y="6" width="1" height="1"/><rect x="10" y="6" width="1" height="1"/><rect x="3" y="9" width="1" height="1"/><rect x="6.5" y="9" width="1" height="1"/><rect x="10" y="9" width="1" height="1"/><rect x="3" y="12" width="1" height="1"/><rect x="6.5" y="12" width="1" height="1"/><rect x="10" y="12" width="1" height="1"/></g></svg>
<div class="abs" style="left:123px;top:273px;width:200px;height:22px;border:1px solid #d6d6d6;border-radius:3px;background:#fff"></div>
<div class="abs" style="left:128px;top:273px;line-height:22px;font-size:13px;color:#777;white-space:nowrap;">장윤아</div>
<div class="abs" style="left:450px;top:273px;width:200px;height:22px;border:1px solid #d6d6d6;border-radius:3px;background:#fff"></div>
<div class="abs" style="left:455px;top:273px;line-height:22px;font-size:13px;color:#777;white-space:nowrap;">장윤아</div>
<div class="abs" style="left:123px;top:304px;width:527px;height:21px;border:1px solid #d6d6d6;border-radius:3px;background:#fff"></div>
<div class="abs" style="left:124px;top:304px;line-height:21px;font-size:13px;color:#111;white-space:nowrap;">연구중</div>
<svg class="abs" style="left:632px;top:311px" width="12" height="8"><path d="M1 1.5L6 6.5L11 1.5" stroke="#555" stroke-width="1.2" fill="none"/></svg>
<div class="abs" style="left:123px;top:334px;width:527px;height:48px;border:1px solid #d6d6d6;border-radius:3px;background:#fff"></div>
<div class="abs" style="left:125px;top:336px;line-height:17px;font-size:12.6px;color:#777;white-space:nowrap">lINE1 TEST PROJECT - 상추 건조스트레스 진행</div>
</div>
<div class="abs" style="left:250px;top:453px;width:10px;height:80px;background:#2e3946"><svg class="abs" style="left:2px;top:31px" width="6" height="15"><path d="M0.5 0v15M3 0v15M5.5 0v15" stroke="#c9ced4" stroke-width="0.8"/></svg></div>
<div class="abs" style="left:250px;top:896px;width:1670px;height:30px;background:#f9f9f9;border-top:2px solid #dedede;border-right:1px solid #d0d0d0"></div>
<svg class="abs" style="left:255px;top:906px" width="16" height="16" viewBox="0 0 16 16"><defs><radialGradient id="ig" cx="0.35" cy="0.3" r="0.8"><stop offset="0" stop-color="#5fb0f5"/><stop offset="1" stop-color="#0b57c0"/></radialGradient></defs><circle cx="8" cy="8" r="8" fill="url(#ig)"/><rect x="7" y="6.5" width="2.2" height="6" fill="#fff"/><rect x="6" y="12" width="4.2" height="1.2" fill="#fff"/><circle cx="8.1" cy="4.2" r="1.2" fill="#fff"/></svg>
<div class="abs" style="left:275px;top:905px;line-height:17px;font-size:12px;font-weight:bold;color:#111;white-space:nowrap">메시지 박스입니다.</div>
<!-- /MAIN -->
<!-- SIDEBAR -->
<div id="side" class="abs">
</div>
<div class="abs" style="left:0;top:60px;width:233px;height:866px;overflow:hidden">
  <div class="m1" style="top:0;height:66px">
    <svg class="ic" style="top:23px" width="20" height="20" viewBox="0 0 20 20" fill="none" stroke="#fff" stroke-width="1.3" stroke-linejoin="round"><path d="M8.3 1.5h3.4l.5 2.4 1.6.9 2.3-.8 1.7 2.9-1.8 1.6v1.9l1.8 1.6-1.7 2.9-2.3-.8-1.6.9-.5 2.4H8.3l-.5-2.4-1.6-.9-2.3.8-1.7-2.9 1.8-1.6V9.1L2.2 7.5l1.7-2.9 2.3.8 1.6-.9z"/><circle cx="10" cy="10" r="2.6"/></svg>
    <div class="tx" style="top:25px;line-height:17px">시스템</div>
    <svg class="ch" style="top:29px" width="14" height="9" viewBox="0 0 14 9" fill="none" stroke="#fff" stroke-width="1.5"><path d="M1 1.5 L7 7.5 L13 1.5"/></svg>
  </div>
  <div class="sep" style="top:66px"></div>
  <div class="m1" style="top:67px;height:66px">
    <svg class="ic" style="top:24px" width="20" height="18" viewBox="0 0 20 18" fill="none" stroke="#fff" stroke-width="1.3" stroke-linejoin="round"><path d="M1 2.2 Q1 1 2.2 1 H6.8 L8.6 2.8 H17.8 Q19 2.8 19 4 V15.8 Q19 17 17.8 17 H2.2 Q1 17 1 15.8Z"/><path d="M4 8.2h2M4 12h2"/><rect x="9" y="8" width="4" height="4"/></svg>
    <div class="tx" style="top:25px;line-height:17px">환경센서 관리</div>
    <svg class="ch" style="top:29px" width="14" height="9" viewBox="0 0 14 9" fill="none" stroke="#fff" stroke-width="1.5"><path d="M1 1.5 L7 7.5 L13 1.5"/></svg>
  </div>
  <div class="sep" style="top:133px"></div>
  <div class="m1" style="top:134px;height:66px">
    <svg class="ic" style="top:23px" width="20" height="19" viewBox="0 0 20 19" fill="none" stroke="#fff" stroke-width="1.3" stroke-linejoin="round"><path d="M1 2.2 Q1 1 2.2 1 H14 Q15 1 15 2.2 V17.8 H3 Q1 17.8 1 15.8Z"/><path d="M15 6 H17.8 Q19 6 19 7.2 V15.8 Q19 17.8 17 17.8 H14"/><path d="M4.5 5.5h7M4.5 9.5h4"/></svg>
    <div class="tx" style="top:26px;line-height:17px">피노타이핑 시스템</div>
    <svg class="ch" style="top:28px" width="14" height="9" viewBox="0 0 14 9" fill="none" stroke="#fff" stroke-width="1.5"><path d="M1 7.5 L7 1.5 L13 7.5"/></svg>
  </div>
  <div class="sep" style="top:200px"></div>
  <div class="m2" style="top:201px"><div class="tx">피노타이핑 대쉬보드</div><svg class="pm" style="top:24px" width="13" height="3"><rect x="0" y="0.5" width="13" height="1.6" fill="#fff"/></svg></div>
  <div class="sep" style="top:251px"></div>
  <div class="m3" style="top:252px;border-bottom:1px solid #eaf5e0"><div class="tx">대쉬보드</div></div>
  <div class="m2" style="top:287px"><div class="tx">기본정보 관리</div><svg class="pm" style="top:24px" width="13" height="3"><rect x="0" y="0.5" width="13" height="1.6" fill="#fff"/></svg></div>
  <div class="sep" style="top:337px"></div>
  <div class="m3" style="top:338px"><div class="tx">생장상 및 영상촬영실 정보</div></div>
  <div class="m3" style="top:373px;background:#fff;color:#222;-webkit-text-stroke:0.4px #222"><div class="tx">프로젝트 정보등록</div></div>
  <div class="m3" style="top:408px"><div class="tx">프로젝트 RFID 등록</div></div>
  <div class="m3" style="top:443px"><div class="tx">카메라 정보 등록</div></div>
  <div class="m3" style="top:478px"><div class="tx">RGB촬영실 카메라좌표정보 등록</div></div>
  <div class="m3" style="top:513px"><div class="tx">엽록소형광촬영실 카메라좌표정보 등록</div></div>
  <div class="m2" style="top:548px"><div class="tx">피노타이핑 운전 관리</div><svg class="pm" style="top:19px" width="13" height="13"><path d="M0 6.5h13M6.5 0v13" stroke="#fff" stroke-width="1.6"/></svg></div>
  <div class="sep" style="top:598px"></div>
  <div class="m2" style="top:599px"><div class="tx">피노타이핑 실험 결과</div><svg class="pm" style="top:19px" width="13" height="13"><path d="M0 6.5h13M6.5 0v13" stroke="#fff" stroke-width="1.6"/></svg></div>
  <div class="sep" style="top:649px"></div>
  <div class="m2" style="top:650px"><div class="tx">프로젝트 백업 관리</div><svg class="pm" style="top:19px" width="13" height="13"><path d="M0 6.5h13M6.5 0v13" stroke="#fff" stroke-width="1.6"/></svg></div>
  <div class="sep" style="top:700px"></div>
  <div class="m2" style="top:701px"><div class="tx">데이타베이스 Backup</div><svg class="pm" style="top:19px" width="13" height="13"><path d="M0 6.5h13M6.5 0v13" stroke="#fff" stroke-width="1.6"/></svg></div>
  <div class="sep" style="top:751px"></div>
  <div class="m1" style="top:752px;height:66px">
    <svg class="ic" style="top:24px" width="20" height="17" viewBox="0 0 20 17" fill="none" stroke="#fff" stroke-width="1.3" stroke-linejoin="round"><path d="M1 2.2 Q1 1 2.2 1 H6.8 L8.6 2.8 H17.8 Q19 2.8 19 4 V14.8 Q19 16 17.8 16 H2.2 Q1 16 1 14.8Z"/><path d="M7.8 7.2 L11.6 9.5 L7.8 11.8Z" fill="#fff" stroke="none"/></svg>
    <div class="tx" style="top:25px;line-height:17px;font-size:13px">CCTV</div>
    <svg class="ch" style="top:29px" width="14" height="9" viewBox="0 0 14 9" fill="none" stroke="#fff" stroke-width="1.5"><path d="M1 1.5 L7 7.5 L13 1.5"/></svg>
  </div>
  <div class="sep" style="top:818px"></div>
  <div class="m1" style="top:819px;height:66px">
    <svg class="ic" style="top:23px;left:11px" width="18" height="21" viewBox="0 0 19 21" preserveAspectRatio="none" fill="none" stroke="#fff" stroke-width="1.3" stroke-linejoin="round"><path d="M9.5 1 L18 5.8 V15.2 L9.5 20 L1 15.2 V5.8Z"/><path d="M9.5 5.5 V11 L4.5 13.8 M9.5 11 L14.5 13.8"/></svg>
    <div class="tx" style="top:26px;line-height:17px">센서 교체 예측관리</div>
    <svg class="ch" style="top:29px" width="14" height="9" viewBox="0 0 14 9" fill="none" stroke="#fff" stroke-width="1.5"><path d="M1 1.5 L7 7.5 L13 1.5"/></svg>
  </div>
</div>
<div id="sscroll" class="abs"></div>
<div id="sthumb" class="abs"></div>
<svg class="abs" style="left:237px;top:66px" width="9" height="6"><path d="M0.5 5 L4.5 1 L8.5 5Z" fill="#a3a3a3"/></svg>
<svg class="abs" style="left:237px;top:915px" width="9" height="6"><path d="M0.5 1 L4.5 5 L8.5 1Z" fill="#505050"/></svg>
</body>
</html>
